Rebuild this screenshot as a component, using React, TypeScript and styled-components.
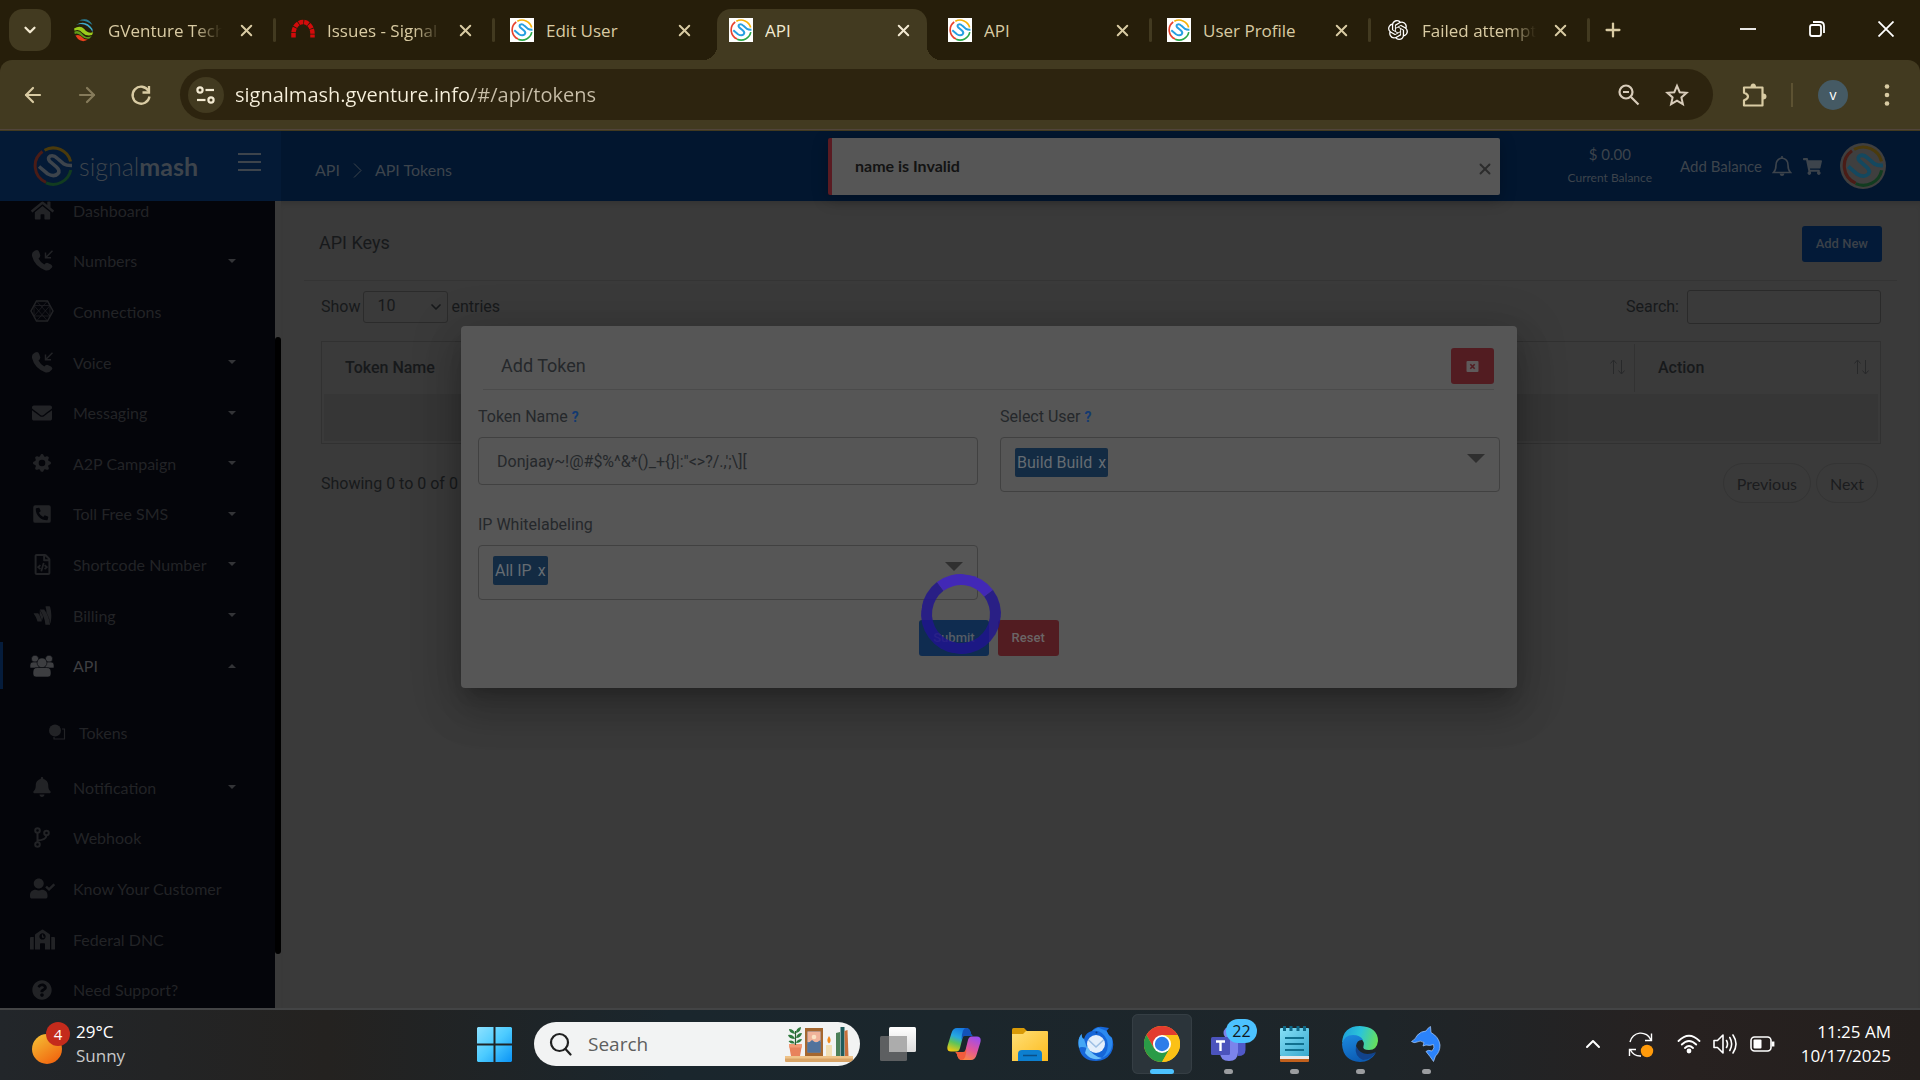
import React from 'react';
import styled, { createGlobalStyle, css } from 'styled-components';
import {
  FaHome, FaEnvelope, FaPhoneSquareAlt, FaRegFileCode, FaGoogleWallet, FaBell,
  FaUserCheck, FaSchool, FaQuestionCircle, FaShoppingCart,
} from 'react-icons/fa';
import { BsGearFill } from 'react-icons/bs';
import { SiOpenai } from 'react-icons/si';
import { ArrowLeft, ArrowRight, ChevronDown, ChevronUp, Plus, X } from 'lucide-react';

const ui = `"Open Sans", "Noto Sans", "Liberation Sans", sans-serif`;
const lato = `Lato, "Liberation Sans", sans-serif`;
const roboto = `Roboto, "Liberation Sans", sans-serif`;

const GlobalStyle = createGlobalStyle`
  *, *::before, *::after { box-sizing: border-box; }
  body { margin: 0; background: #3a3a3a; font-family: ${ui}; }
  button, input, select { font: inherit; color: inherit; margin: 0; }
  button { border: 0; padding: 0; background: none; cursor: pointer; }
  a { color: inherit; text-decoration: none; }
  svg { display: block; flex: none; }
`;

/* ---------- browser frame ---------- */

const Screen = styled.div`
  display: grid;
  grid-template-rows: auto auto minmax(0, 1fr) auto;
  height: 100vh;
  overflow: hidden;
`;

const TabStrip = styled.header`
  display: flex;
  align-items: flex-end;
  height: 60px;
  padding-left: 9px;
  background: #261e0a;
  color: #d9cba3;
`;

const TabSearch = styled.button`
  display: grid;
  place-items: center;
  width: 42px;
  height: 42px;
  margin: 0 9px 9px 0;
  border-radius: 14px;
  background: #423a20;
  color: #f3ead2;
`;

const Tab = styled.div<{ $active?: boolean; $divided?: boolean }>`
  position: relative;
  display: flex;
  align-items: center;
  flex: 0 1 210px;
  min-width: 0;
  height: 51px;
  padding: 0 14px 9px 12px;
  margin-right: 9px;
  ${p => p.$active && css`
    background: #423a20;
    color: #f3ead2;
    border-radius: 14px 14px 0 0;
    &::before, &::after {
      content: '';
      position: absolute;
      bottom: 0;
      width: 14px;
      height: 14px;
    }
    &::before { left: -14px; background: radial-gradient(circle at 0 0, transparent 14px, #423a20 14px); }
    &::after { right: -14px; background: radial-gradient(circle at 100% 0, transparent 14px, #423a20 14px); }
  `}
  ${p => p.$divided && css`
    &::after {
      content: '';
      position: absolute;
      right: -6px;
      top: 9px;
      width: 3px;
      height: 24px;
      border-radius: 2px;
      background: #423a20;
    }
  `}
`;

const TabTitle = styled.button<{ $fade?: boolean }>`
  flex: 1;
  min-width: 0;
  margin: 0 14px 0 12px;
  overflow: hidden;
  white-space: nowrap;
  text-align: left;
  font-size: 17px;
  line-height: 26px;
  padding-top: 1px;
  ${p => p.$fade && css`mask-image: linear-gradient(90deg, #000 76%, transparent);`}
`;

const IconButton = styled.button<{ $w?: number; $h?: number }>`
  display: grid;
  place-items: center;
  flex: none;
  width: ${p => p.$w ?? 20}px;
  height: ${p => p.$h ?? 24}px;
`;

const WindowControls = styled.div`
  display: flex;
  align-self: flex-start;
  margin-left: auto;
  color: #fff;
`;

const ToolbarBack = styled.div`
  background: #261e0a;
`;

const Toolbar = styled.nav`
  display: flex;
  align-items: center;
  height: 71px;
  padding: 0 9px 2px 6px;
  border-radius: 12px 12px 0 0;
  background: #423a20;
  box-shadow: inset 0 -1px #423a20, inset 0 -2px #51443a;
  color: #d9cba3;
`;

const Omnibox = styled.div`
  display: flex;
  align-items: center;
  flex: 1;
  height: 51px;
  margin: 0 13px 0 12px;
  padding: 0 12px 0 8px;
  border-radius: 26px;
  background: #2d240f;
  color: #d8ccba;
`;

const SiteInfo = styled.button`
  display: grid;
  place-items: center;
  width: 36px;
  height: 36px;
  border-radius: 50%;
  background: #423a20;
  color: #f3ead2;
`;

const Url = styled.input`
  flex: 1;
  min-width: 0;
  margin-left: 11px;
  padding: 0;
  border: 0;
  outline: 0;
  font-size: 20px;
  line-height: 30px;
  color: transparent;
  background: linear-gradient(90deg, #f7f0dc 237px, #c9bfa9 237px);
  background-clip: text;
  -webkit-background-clip: text;
`;

const ToolbarRule = styled.span`
  width: 2px;
  height: 24px;
  margin: 0 10px;
  background: #5d5232;
`;

const Profile = styled.button`
  display: grid;
  place-items: center;
  width: 30px;
  height: 30px;
  margin: 0 15px;
  border-radius: 50%;
  background: #455a64;
  color: #fff;
  font-size: 14px;
`;

/* ---------- web page ---------- */

const Page = styled.div`
  position: relative;
  display: grid;
  grid-template-columns: 281px minmax(0, 1fr);
  grid-template-rows: 70px minmax(0, 1fr);
  overflow: hidden;
  background: #3a3a3a;
  font-family: ${roboto};
  font-size: 16px;
  color: #17191b;
`;

const Brand = styled.div`
  display: flex;
  align-items: center;
  padding: 0 20px 1px 33px;
  background: #041a36;
  color: #3d444c;
`;

const BrandName = styled.a`
  margin: 0 auto 0 6px;
  font: 300 25px/32px ${lato};
  b { font-weight: 700; }
`;

const MenuToggle = styled(IconButton)`
  align-self: flex-start;
  margin-top: 19px;
`;

const Topbar = styled.div`
  display: flex;
  align-items: center;
  padding: 0 34px;
  background: #02162f;
  color: #3d444c;
  font-family: ${lato};
`;

const Crumbs = styled.nav`
  display: flex;
  align-items: center;
  gap: 13px;
  padding-top: 8px;
  margin-right: auto;
  line-height: 24px;
`;

const Balance = styled.div`
  display: flex;
  flex-direction: column;
  align-items: center;
  margin-right: 28px;
  font-size: 15px;
  line-height: 23px;
  small { font-size: 12px; }
`;

const TopLinks = styled.div`
  display: flex;
  align-items: center;
  gap: 10px;
  font-size: 15px;
`;

const Account = styled.button`
  display: grid;
  place-items: center;
  width: 46px;
  height: 46px;
  margin-left: 8px;
  border-radius: 50%;
  background: #3f3f3f;
`;

const Toast = styled.div`
  position: absolute;
  top: 7px;
  left: 828px;
  display: flex;
  align-items: center;
  justify-content: space-between;
  width: 35vw;
  height: 57px;
  padding: 0 5px 2px 23px;
  border-left: 4px solid #5a1b22;
  border-radius: 2px;
  background: #565656;
  box-shadow: 0 4px 16px rgba(0, 0, 0, 0.25);
  color: #131313;
  font: 700 16px/24px ${lato};
`;

const Dismiss = styled(IconButton)`
  align-self: flex-end;
  margin-bottom: 12px;
  color: #2c2c2c;
`;

const Sidebar = styled.aside`
  display: flex;
  overflow: hidden;
  font-family: ${lato};
`;

const Menu = styled.nav`
  flex: 1;
  min-width: 0;
  overflow: hidden;
  background: #04050a;
  color: #222326;
`;

const MenuGroup = styled.ul<{ $height: number; $scrolled?: boolean }>`
  display: grid;
  grid-template-columns: minmax(0, 1fr);
  grid-auto-rows: 1fr;
  align-items: center;
  height: ${p => p.$height}px;
  margin: ${p => (p.$scrolled ? '-16px' : '0')} 0 0;
  padding: 0;
  list-style: none;
`;

const MenuLink = styled.a<{ $active?: boolean }>`
  display: grid;
  grid-template-columns: 26px minmax(0, 1fr) 10px;
  align-items: center;
  column-gap: 18px;
  height: 47px;
  padding: 0 38px 0 26px;
  border-left: 3px solid ${p => (p.$active ? '#051c3b' : 'transparent')};
  color: ${p => (p.$active ? '#3d3e41' : 'inherit')};
  white-space: nowrap;
  > svg { justify-self: center; }
  > svg:last-child { color: #333437; }
`;

const SubLink = styled.a`
  display: flex;
  align-items: center;
  gap: 13px;
  height: 71px;
  padding: 11px 0 0 49px;
`;

const ScrollTrack = styled.div`
  width: 6px;
  padding-top: 136px;
  &::before {
    content: '';
    display: block;
    height: 617px;
    border-radius: 3px;
    background: #000;
  }
`;

const Content = styled.main`
  padding: 0 23px;
  box-shadow: inset 0 5px 6px -4px rgba(0, 0, 0, 0.18);
`;

const TitleRow = styled.div`
  display: flex;
  align-items: center;
  justify-content: space-between;
  height: 80px;
  padding: 7px 15px 0 15px;
  border-bottom: 1px solid #343434;
`;

const Heading = styled.h1`
  margin: 0;
  padding-bottom: 2px;
  font-size: 18px;
  font-weight: 400;
  line-height: 24px;
`;

const Button = styled.button<{ $tone: 'navy' | 'blue' | 'red' }>`
  display: grid;
  place-items: center;
  height: 36px;
  padding: 0 14px;
  border-radius: 3px;
  font: 500 13px/20px ${roboto};
  ${p => p.$tone === 'navy' && css`background: #031a38; color: #3b4149;`}
  ${p => p.$tone === 'blue' && css`background: #0f2c50; color: #565d66;`}
  ${p => p.$tone === 'red' && css`background: #521c21; color: #6b6566;`}
`;

const Controls = styled.div`
  display: flex;
  align-items: center;
  justify-content: space-between;
  padding: 9px 16px 17px 17px;
  line-height: 24px;
`;

const ControlLabel = styled.label`
  display: flex;
  align-items: center;
  gap: 3px;
`;

const SelectWrap = styled.span`
  display: grid;
  align-items: center;
  > * { grid-area: 1 / 1; }
  svg { justify-self: end; margin-right: 4px; pointer-events: none; }
`;

const EntriesSelect = styled.select`
  width: 85px;
  height: 32px;
  padding: 0 13px 2px;
  appearance: none;
  border: 1px solid #2b2b2b;
  border-radius: 3px;
  background: none;
`;

const SearchField = styled.input`
  width: 194px;
  height: 34px;
  margin-left: 5px;
  padding: 0 8px;
  border: 1px solid #2a2a2a;
  border-radius: 3px;
  background: none;
`;

const TableWrap = styled.div`
  padding: 0 16px 0 17px;
`;

const DataTable = styled.table`
  width: 100%;
  border: 1px solid #313131;
  border-collapse: separate;
  border-spacing: 2px;
  table-layout: fixed;
`;

const Th = styled.th<{ $w?: string; $divided?: boolean }>`
  width: ${p => p.$w ?? 'auto'};
  height: 48px;
  padding: 0 9px 2px 21px;
  border-right: ${p => (p.$divided ? '1px solid #323232' : '0')};
  font-weight: 500;
  text-align: left;
  > span { display: flex; align-items: center; justify-content: space-between; }
  svg { margin-left: auto; }
`;

const EmptyCell = styled.td`
  height: 47px;
  background: #363636;
`;

const TableFoot = styled.div`
  display: flex;
  align-items: center;
  justify-content: space-between;
  padding: 19px 19px 0 17px;
`;

const Pager = styled.div`
  display: flex;
  gap: 5px;
`;

const PageButton = styled.button`
  height: 40px;
  padding: 0 13px;
  border: 1px solid #343434;
  border-radius: 20px;
  font-family: ${lato};
  color: #1b1c1e;
`;

/* ---------- dialog ---------- */

const Overlay = styled.div`
  position: absolute;
  inset: 0;
  display: flex;
  align-items: flex-start;
  justify-content: center;
  padding: 195px 0 0 58px;
`;

const Dialog = styled.section`
  width: 55vw;
  padding: 22px 17px 32px;
  border-radius: 4px;
  background: #565656;
  box-shadow: 0 11px 15px -7px rgba(0, 0, 0, 0.2), 0 24px 38px 3px rgba(0, 0, 0, 0.14),
    0 9px 46px 8px rgba(0, 0, 0, 0.16);
  color: #25282b;
`;

const DialogHead = styled.div`
  display: flex;
  align-items: flex-start;
  justify-content: space-between;
  height: 42px;
  margin: 0 6px 14px 5px;
  padding-left: 18px;
  border-bottom: 1px solid #4b4b4b;
  ${Heading} { padding-top: 6px; }
`;

const Fields = styled.div`
  display: grid;
  grid-template-columns: 1fr 1fr;
  gap: 20px 22px;
  align-items: start;
`;

const Field = styled.div`
  display: grid;
  gap: 7px;
  > label, > span { line-height: 26px; }
`;

const Hint = styled.abbr`
  margin-left: 4px;
  color: #133a70;
  font-size: 14px;
  font-weight: 700;
  text-decoration: none;
`;

const TextInput = styled.input`
  width: 100%;
  height: 48px;
  padding: 0 18px;
  border: 1px solid #414141;
  border-radius: 4px;
  outline: 0;
  background: none;
`;

const MultiSelect = styled.div`
  display: flex;
  align-items: flex-start;
  justify-content: space-between;
  height: 55px;
  padding: 10px 14px 0;
  border: 1px solid #414141;
  border-radius: 4px;
`;

const Chip = styled.span`
  display: flex;
  align-items: center;
  gap: 6px;
  height: 29px;
  padding: 0 2px;
  border-radius: 2px;
  background: #132b43;
  color: #656c72;
`;

const Caret = styled.button`
  margin-top: 6px;
  border: 9px solid transparent;
  border-top-color: #2f2f2f;
  border-bottom-width: 0;
`;

const Actions = styled.div`
  display: flex;
  justify-content: center;
  gap: 9px;
  margin-top: 20px;
`;

const Spinner = styled.div`
  position: absolute;
  top: 443px;
  left: calc(50% - 39px);
  width: 80px;
  height: 80px;
  border: 11px solid rgba(32, 20, 144, 0.82);
  border-top-color: #4228b6;
  border-radius: 50%;
  transform: rotate(8deg);
`;

/* ---------- taskbar ---------- */

const Taskbar = styled.footer`
  display: grid;
  grid-template-columns: 1fr auto 1fr;
  align-items: center;
  height: 72px;
  padding-bottom: 2px;
  border-top: 2px solid #434445;
  background: linear-gradient(90deg, #22262a, #242220 17%, #1a262d 35%, #1b262c 50%, #1e2529 72%, #272120 88%, #241f1d);
  color: #fff;
  font-size: 17px;
  line-height: 24px;
`;

const Weather = styled.button`
  display: flex;
  align-items: center;
  gap: 4px;
  justify-self: start;
  margin-left: 31px;
  text-align: left;
  small { display: block; font-size: 17px; color: #c9c9c9; }
`;

const TaskItems = styled.div`
  display: flex;
  align-items: center;
  gap: 6px;
`;

const Tile = styled.button<{ $active?: boolean; $dot?: boolean }>`
  position: relative;
  display: grid;
  place-items: center;
  width: 60px;
  height: 60px;
  border-radius: 6px;
  ${p => p.$active && css`background: #2b343a; box-shadow: inset 0 0 0 1px #353e44;`}
  ${p => (p.$active || p.$dot) && css`
    &::after {
      content: '';
      position: absolute;
      bottom: 0;
      width: ${p.$active ? 24 : 9}px;
      height: 5px;
      border-radius: 3px;
      background: ${p.$active ? '#4cc2ff' : '#9b9da0'};
    }
  `}
`;

const Badge = styled.span`
  position: absolute;
  top: 5px;
  right: 1px;
  width: 31px;
  height: 24px;
  border-radius: 12px;
  background: #4cc2ff;
  color: #101820;
  font-size: 16px;
  line-height: 24px;
`;

const SearchBox = styled.label`
  display: flex;
  align-items: center;
  width: 326px;
  height: 44px;
  margin: 0 2px 0 4px;
  padding: 0 7px 0 14px;
  border-radius: 22px;
  background: #f2f3f3;
  overflow: hidden;
  input {
    flex: 1;
    min-width: 0;
    margin-left: 16px;
    padding: 0;
    border: 0;
    background: none;
    font-size: 19px;
    line-height: 30px;
  }
  input::placeholder { color: #5e5e5e; opacity: 1; }
`;

const Tray = styled.div`
  display: flex;
  align-items: center;
  justify-self: end;
  margin-right: 29px;
`;

const Clock = styled.time`
  margin-left: 14px;
  text-align: right;
  white-space: pre-line;
`;

/* ---------- drawings ---------- */

const Mark = ({ size, dim, mono }: { size: number; dim?: boolean; mono?: boolean }) => {
  const c = dim ? ['#4a1c16', '#4a3a0c', '#123c20'] : ['#e8432e', '#f5b20a', '#2aa84a'];
  return (
    <svg width={size} height={size} viewBox="0 0 40 40" fill="none" strokeWidth="3" aria-hidden>
      <path d="M13 36.3A17.8 17.8 0 0 1 9.5 5.5" stroke={c[0]} />
      <path d="M11.5 4.2A18 18 0 0 1 37.6 15.5" stroke={c[1]} />
      <path d="M37.8 24A18 18 0 0 1 13 36.8" stroke={c[2]} />
      <path
        d="M6 20.5L14.5 27.7Q21 31.5 25 27.6Q27.5 24.6 23.5 21L16.5 15Q14.3 12 17 10.2Q20.5 8.6 24.5 12.5L31 18Q33.5 19.7 39 19.5"
        stroke={mono ? '#3d444c' : dim ? '#14485f' : '#27a0e0'}
        strokeWidth="3.6"
      />
    </svg>
  );
};

const Favicon = styled.span`
  display: grid;
  place-items: center;
  width: 24px;
  height: 24px;
  background: #fff;
`;

const MashIcon = () => <Favicon><Mark size={22} /></Favicon>;

const GVentureIcon = () => (
  <svg width="24" height="24" viewBox="0 0 24 24" aria-hidden>
    <g transform="rotate(14 12 12)">
      <path d="M5 4Q13-2 19 5Q11 2 5 4Z" fill="#2b7f98" />
      <path d="M3 9Q11 1 20 9L21 12Q12 3 3 9Z" fill="#3fa9c9" />
      <path d="M2 13Q7 8 12 11Q17 15 21.500 12L21 15Q16 18 11 15Q7 12 3 15Z" fill="#9ccb1c" />
      <path d="M3 16Q7 13 11 16Q16 20 21 16L19.500 19Q15 21 11 18.500Q7 16 4 18Z" fill="#5f9c18" />
      <path d="M5 19.500Q8 17 11 19Q15 22 18.500 20Q15 24 10.500 23Q8 22.500 5 19.500Z" fill="#e8401c" />
    </g>
  </svg>
);

const RedmineIcon = () => (
  <svg width="24" height="24" viewBox="0 0 24 24" fill="none" aria-hidden>
    <path d="M2.500 19.500V15.500A9.500 11.500 0 0 1 21.500 15.500V19.500" stroke="#d30b0b" strokeWidth="4.500" strokeDasharray="4.600 .8" />
  </svg>
);

const ReloadIcon = () => (
  <svg width="22" height="22" viewBox="0 0 22 22" fill="none" stroke="currentColor" strokeWidth="2.300" aria-hidden>
    <path d="M18.500 7A8.500 8.500 0 1 0 19.500 12.500" />
    <path d="M19 2V8.500H12.500" />
  </svg>
);

const TuneIcon = () => (
  <svg width="20" height="20" viewBox="0 0 20 20" fill="none" stroke="currentColor" strokeWidth="2.200" aria-hidden>
    <circle cx="4" cy="5" r="2.600" /><path d="M9.500 5H18" />
    <circle cx="15" cy="15" r="2.600" /><path d="M1 15H9.500" />
  </svg>
);

const ZoomOutIcon = () => (
  <svg width="24" height="24" viewBox="0 0 24 24" fill="none" stroke="currentColor" strokeWidth="2.200" aria-hidden>
    <circle cx="9" cy="9" r="6.500" /><path d="M14 14L21.500 21.500M6 9H12" />
  </svg>
);

const StarIcon = () => (
  <svg width="24" height="24" viewBox="0 0 24 24" fill="none" stroke="currentColor" strokeWidth="2" aria-hidden>
    <path d="M12 2.800L14.700 9.200L21.600 9.800L16.400 14.400L17.900 21.200L12 17.600L6.100 21.200L7.600 14.400L2.400 9.800L9.300 9.200Z" />
  </svg>
);

const PuzzleIcon = () => (
  <svg width="28" height="28" viewBox="0 0 28 28" fill="none" stroke="currentColor" strokeWidth="2.200" strokeLinejoin="round" aria-hidden>
    <path d="M4 6.500H22.500V24.500H4V19.200Q8 18 8 15.500Q8 13 4 11.800Z" />
    <path d="M10.500 6Q10.500 2.500 13.300 2.500Q16 2.500 16 6ZM23 12.500Q26.500 12.500 26.500 15.500Q26.500 18.500 23 18.500Z" fill="currentColor" stroke="none" />
  </svg>
);

const DotsIcon = () => (
  <svg width="6" height="24" viewBox="0 0 6 24" fill="currentColor" aria-hidden>
    <circle cx="3" cy="3.500" r="2.300" /><circle cx="3" cy="12" r="2.300" /><circle cx="3" cy="20.500" r="2.300" />
  </svg>
);

const WindowGlyph = ({ d }: { d: string }) => (
  <svg width="16" height="16" viewBox="0 0 16 16" fill="none" stroke="currentColor" strokeWidth="1.800" aria-hidden><path d={d} /></svg>
);

const BarsIcon = () => (
  <svg width="23" height="20" viewBox="0 0 23 20" stroke="currentColor" strokeWidth="2" aria-hidden>
    <path d="M0 2H23M0 10H23M0 18H23" />
  </svg>
);

const CrumbIcon = () => (
  <svg width="9" height="15" viewBox="0 0 9 15" fill="none" stroke="currentColor" aria-hidden><path d="M1 .5L8 7.500L1 14.500" /></svg>
);

const BellOutline = () => (
  <svg width="20" height="22" viewBox="0 0 20 22" fill="none" stroke="currentColor" strokeWidth="1.600" aria-hidden>
    <path d="M1.500 17.500Q4 15 4 10Q4 4 10 3Q16 4 16 10Q16 15 18.500 17.500ZM10 3V1" />
    <path d="M7.500 18.500H12.500Q12 21 10 21Q8 21 7.500 18.500Z" fill="currentColor" stroke="none" />
  </svg>
);

const SortIcon = () => (
  <svg width="15" height="16" viewBox="0 0 15 16" fill="none" stroke="#28292a" aria-hidden>
    <path d="M3.500 15V1.500M.5 4.500L3.500 1L6.500 4.500M11.500 1V14.500M8.500 11.500L11.500 15L14.500 11.500" />
  </svg>
);

const CaretGlyph = ({ up }: { up?: boolean }) => (
  <svg width="8" height="4" viewBox="0 0 8 4" fill="currentColor" aria-hidden><path d={up ? 'M0 4L4 0L8 4Z' : 'M0 0H8L4 4Z'} /></svg>
);

const PhoneInIcon = () => (
  <svg width="21" height="21" viewBox="0 0 21 21" aria-hidden>
    <path d="M1 2Q3 0 5 0Q6.500 0 7.200 2L8.200 5Q8.700 7 6.500 8.600Q8.500 12.600 12.300 14.400Q14 12.400 15.800 13L19 14.500Q21 15.800 20 17.500Q17.500 21.200 13 20.200Q2.500 16 0 6Q-.2 3.300 1 2Z" fill="currentColor" />
    <path d="M20.500 .8L14 7.300M13.500 2.500V7.700H19" fill="none" stroke="currentColor" strokeWidth="1.500" />
  </svg>
);

const HexIcon = () => (
  <svg width="24" height="22" viewBox="0 0 24 22" fill="none" stroke="currentColor" aria-hidden>
    <path d="M6.500 1H17.500L23 11L17.500 21H6.500L1 11Z" strokeWidth="1.500" />
    <path d="M6.500 1L20 16H4L17.500 1L20 5.500L6.500 21M4 5.500L17.500 21M4 5.500V16M20 5.500V16M4 5.500H20" strokeWidth=".7" />
  </svg>
);

const GroupIcon = () => (
  <svg width="24" height="22" viewBox="0 0 24 22" fill="currentColor" stroke="#04050a" strokeWidth=".6" aria-hidden>
    <circle cx="5" cy="3.800" r="3.600" /><circle cx="19" cy="3.800" r="3.600" />
    <path d="M0 13V10Q0 7 3 7H9V13ZM24 13V10Q24 7 21 7H15V13Z" />
    <circle cx="12" cy="7.800" r="4.900" />
    <path d="M3 19V17Q3 12.500 7.500 12.500H16.500Q21 12.500 21 17V19Q21 22 18 22H6Q3 22 3 19Z" />
  </svg>
);

const BranchIcon = () => (
  <svg width="18" height="21" viewBox="0 0 18 21" fill="none" stroke="currentColor" strokeWidth="2" aria-hidden>
    <circle cx="4.500" cy="3.500" r="2.300" /><circle cx="4.500" cy="17.500" r="2.300" /><circle cx="13.500" cy="6" r="2.300" />
    <path d="M4.500 6V15M4.500 13.500Q13 13 13.500 8.500" />
  </svg>
);

const TokensIcon = () => (
  <svg width="17" height="17" viewBox="0 0 17 17" aria-hidden>
    <path d="M13 5H15.500V15H5V13" fill="none" stroke="currentColor" strokeWidth="1.200" />
    <circle cx="6" cy="6.500" r="6" fill="currentColor" />
  </svg>
);

const CloseBox = () => (
  <svg width="15" height="11" viewBox="0 0 15 11" aria-hidden>
    <rect x="1.500" width="12" height="11" rx="1" fill="#5f5a5b" />
    <path d="M5.300 3.300L9.700 7.700M9.700 3.300L5.300 7.700" stroke="#521c21" strokeWidth="1.600" />
  </svg>
);

const SunIcon = () => (
  <svg width="41" height="44" viewBox="0 0 41 44" aria-hidden>
    <defs><linearGradient id="sun" x1="0" y1="0" x2=".7" y2="1"><stop stopColor="#f4c437" /><stop offset="1" stopColor="#f2660f" /></linearGradient></defs>
    <circle cx="16" cy="27" r="15" fill="url(#sun)" />
    <circle cx="27" cy="12" r="12" fill="#c42b1c" />
    <text x="27" y="17.500" textAnchor="middle" fill="#fff" fontSize="15">4</text>
  </svg>
);

const StartIcon = () => (
  <svg width="35" height="35" viewBox="0 0 35 35" aria-hidden>
    <defs><linearGradient id="win" x1="0" y1="0" x2="1" y2="1"><stop stopColor="#8ee2ff" /><stop offset=".5" stopColor="#4ccbff" /><stop offset="1" stopColor="#0a93f5" /></linearGradient></defs>
    <path d="M1 0H16.500V16.500H0V1ZM18.500 0H34L35 1V16.500H18.500ZM0 18.500H16.500V35H1L0 34ZM18.500 18.500H35V34L34 35H18.500Z" fill="url(#win)" />
  </svg>
);

const ShelfIcon = () => (
  <svg width="68" height="38" viewBox="0 0 68 38" aria-hidden>
    <rect y="31" width="68" height="6" rx="1" fill="#d9a466" /><rect y="31" width="68" height="2.500" fill="#efc389" />
    <path d="M4 20H17L15 31H6Z" fill="#e8825c" /><rect x="4" y="19" width="13" height="3.500" fill="#f29a74" />
    <path d="M10.500 20V6" stroke="#2d5b33" strokeWidth="1.200" />
    <path d="M10 9Q4 8 4 4Q9 4 10 9ZM11 8Q11 3 16 2Q16 7 11 8ZM10 14Q4 14 3 10Q8 9 10 14ZM11 13Q12 8 17 8Q16 13 11 13ZM10 18.500Q5 19 3.500 16Q8 14 10 18.500ZM11 18Q12 14 17 14Q16 18 11 18Z" fill="#2f7a3f" />
    <rect x="20" y="3" width="18" height="28" fill="#a5672f" /><rect x="22.500" y="6.500" width="13" height="21" fill="#5b8cc0" />
    <path d="M22.500 6.500H35.500V17H22.500Z" fill="#f0b39a" /><circle cx="29" cy="12" r="2.300" fill="#fbe3c4" /><path d="M22.500 19L27 15L31 18L35.500 15V27.500H22.500Z" fill="#52739c" />
    <rect x="41" y="20" width="6" height="11" fill="#f2dfb4" /><path d="M44 11Q47.500 16 44 18.500Q40.500 16 44 11Z" fill="#f28a1c" />
    <path d="M51 8L55 7V31H51Z" fill="#4c7f58" /><rect x="55.500" y="2" width="4" height="29" fill="#1f5b5b" />
    <path d="M59.500 6L62.500 5L63.500 31H60Z" fill="#c8703c" />
  </svg>
);

const TaskViewIcon = () => (
  <svg width="36" height="34" viewBox="0 0 36 34" aria-hidden>
    <defs>
      <linearGradient id="tv" x1="0" y1="0" x2="0" y2="1"><stop stopColor="#fff" /><stop offset="1" stopColor="#dcdcdc" /></linearGradient>
    </defs>
    <rect x="9" y="0" width="27" height="25" rx="1.500" fill="url(#tv)" />
    <rect x="0" y="9" width="27" height="25" rx="1.500" fill="#5d5f61" />
    <rect x="9" y="9" width="18" height="16" fill="#acacac" />
  </svg>
);

const CopilotIcon = () => (
  <svg width="34" height="32" viewBox="0 0 34 32" aria-hidden>
    <defs>
      <linearGradient id="cpa" x1=".6" y1="0" x2=".2" y2="1"><stop stopColor="#1476e0" /><stop offset=".4" stopColor="#27a9e0" /><stop offset=".65" stopColor="#5cc45a" /><stop offset="1" stopColor="#f2c80f" /></linearGradient>
      <linearGradient id="cpb" x1=".8" y1="0" x2=".3" y2="1"><stop stopColor="#9a4df0" /><stop offset=".5" stopColor="#e0559c" /><stop offset="1" stopColor="#ff8a3c" /></linearGradient>
    </defs>
    <path d="M16 8H26Q24.500 8 23.500 4Q22.500 0 19 0H10Q6 0 4.500 5L.8 17Q-1 23.500 4 23.500H9.500Q12 23.500 13 20Z" fill="url(#cpa)" />
    <path d="M18 24H8Q9.500 24 10.500 28Q11.500 32 15 32H24Q28 32 29.500 27L33.200 15Q35 8.500 30 8.500H24.500Q22 8.500 21 12Z" fill="url(#cpb)" />
    <path d="M19 0Q22.500 0 23.500 4Q24.500 8 26 8H18Q15.500 8 14.500 12Q15 0 19 0Z" fill="#1352b8" />
    <path d="M15 32Q11.500 32 10.500 28Q9.500 24 8 24H16Q18.500 24 19.500 20Q19 32 15 32Z" fill="#f25c3c" />
  </svg>
);

const FolderIcon = () => (
  <svg width="36" height="33" viewBox="0 0 36 33" aria-hidden>
    <defs><linearGradient id="fd" x1="0" y1="0" x2="1" y2="1"><stop stopColor="#ffdf76" /><stop offset="1" stopColor="#fdbb1e" /></linearGradient></defs>
    <path d="M0 1.500Q0 0 1.500 0H12L16 4L12 8H0Z" fill="#d99a07" />
    <path d="M0 6H11L14 3H35Q36 3 36 4V33H0Z" fill="url(#fd)" />
    <path d="M6 33V26Q6 22 10 22H26Q30 22 30 26V33Z" fill="#0d7fcf" /><path d="M11 27.500H25" stroke="#0b4f86" strokeWidth="1.500" />
  </svg>
);

const ThunderbirdIcon = () => (
  <svg width="36" height="36" viewBox="0 0 36 36" aria-hidden>
    <path d="M18 35Q4 35 1 22Q-1 12 4 8Q3 12 6 13Q8 6 14 5Q18 0 25 1L31 2L28.500 5Q30 9 34 12Q37 20 33 27Q28 35 18 35Z" fill="#1666d8" />
    <path d="M4 8Q3 12 6 13L9 22Q3 20 1 22Q-1 12 4 8Z" fill="#43a6f5" />
    <path d="M14 5Q24 3 29 14Q32 24 24 32Q36 27 34 12Q30 9 28.500 5L20 1.500Z" fill="#2b8af0" />
    <path d="M7 27Q14 36 24 32Q14 30 9 20Z" fill="#6cc0fa" />
    <circle cx="18" cy="18" r="9" fill="#e4effb" /><path d="M10.500 14L18 21L25.500 14" fill="none" stroke="#9dbfe4" strokeWidth="1.600" />
    <circle cx="18.500" cy="6.500" r="1" fill="#0b3c86" />
  </svg>
);

const ChromeIcon = () => (
  <svg width="36" height="36" viewBox="0 0 36 36" aria-hidden>
    <circle cx="18" cy="18" r="18" fill="#fbc116" />
    <path d="M2.410 9A18 18 0 0 1 33.590 9H18L10.200 22.500Z" fill="#e33b2e" />
    <path d="M2.410 9A18 18 0 0 0 18 36L25.800 22.500H10.200Z" fill="#2a9b47" />
    <path d="M18 9H33.590A18 18 0 0 1 18 36L25.800 22.500Z" fill="#fbc116" />
    <circle cx="18" cy="18" r="9" fill="#fff" /><circle cx="18" cy="18" r="7.200" fill="#2d7de9" />
  </svg>
);

const TeamsIcon = () => (
  <svg width="36" height="36" viewBox="0 0 36 36" aria-hidden>
    <circle cx="20" cy="7" r="6.500" fill="#7b83eb" />
    <path d="M24 13H35.500V24Q35.500 30 28 30Z" fill="#5059c9" />
    <path d="M10 12H28V26Q28 35 19 35Q10 35 10 26Z" fill="#7b83eb" />
    <rect x="1" y="11" width="19" height="18" rx="1.500" fill="#4b53bc" />
    <path d="M6 15.500H15M10.500 15.500V25" stroke="#fff" strokeWidth="2.400" />
  </svg>
);

const NotepadIcon = () => (
  <svg width="29" height="36" viewBox="0 0 29 36" aria-hidden>
    <defs><linearGradient id="np" x1="0" y1="0" x2="1" y2="1"><stop stopColor="#86e0f7" /><stop offset="1" stopColor="#38a9cf" /></linearGradient></defs>
    <rect y="2" width="29" height="28" rx="1" fill="url(#np)" />
    <path d="M4.500 0V5M11 0V5M18 0V5M24.500 0V5" stroke="#0f6785" strokeWidth="3" />
    <path d="M5 12H24M5 18H24M5 24H24" stroke="#10708f" strokeWidth="2" />
    <path d="M0 30H29V33H0Z" fill="#e9e9e9" /><path d="M0 33H29V35Q29 36 28 36H1Q0 36 0 35Z" fill="#c2601c" />
  </svg>
);

const EdgeIcon = () => (
  <svg width="36" height="36" viewBox="0 0 36 36" aria-hidden>
    <defs>
      <linearGradient id="ed1" x1="0" y1=".3" x2="1" y2=".5"><stop stopColor="#1e9fdc" /><stop offset=".5" stopColor="#2cc5d8" /><stop offset="1" stopColor="#66e05c" /></linearGradient>
      <linearGradient id="ed2" x1="0" y1="0" x2=".4" y2="1"><stop stopColor="#1c8ae0" /><stop offset="1" stopColor="#0c5cb4" /></linearGradient>
    </defs>
    <path d="M0 17Q1 0 18 0Q36 1 36 15Q35 24 27 24Q20 24 21.500 20Q23 16 19 13Q10 6 0 17Z" fill="url(#ed1)" />
    <path d="M0 18Q2 9 11 9Q18 9 21 14Q15 13 14 20Q14 28 22 31Q28 32 34 27Q28 36 18 36Q1 35 0 18Z" fill="url(#ed2)" />
    <path d="M14 20Q12 30 21 34Q30 33 34 26Q20 32 14 20Z" fill="#12438c" />
  </svg>
);

const DolphinIcon = () => (
  <svg width="30" height="36" viewBox="0 0 30 36" fill="#2b83fb" stroke="#a9cdfd" strokeWidth=".7" aria-hidden>
    <path d="M.5 15.500Q5 13 6 9.500Q10 5 15 5Q17 1.500 19.500 .5L20 6.500Q28 11 29 19Q29 26 24.500 30L22.500 35.500L19 30.500L15 25.500Q17 23.500 21 25Q24 22 22.500 18.500Q19 20 15 19L12 20L13 16.500Q9 14 6 16Q3 17.500 .5 15.500Z" />
  </svg>
);

const SyncIcon = () => (
  <svg width="26" height="26" viewBox="0 0 26 26" fill="none" stroke="#fff" strokeWidth="1.400" aria-hidden>
    <path d="M2 10A11 11 0 0 1 23 8M23.500 1.500V8.500H17M1.500 24V17.500H8M2.500 18A11 11 0 0 0 13 24" />
    <circle cx="19" cy="19" r="6.200" fill="#ff9a0a" stroke="none" />
  </svg>
);

const WifiIcon = () => (
  <svg width="24" height="20" viewBox="0 0 24 20" fill="none" stroke="#fff" strokeWidth="1.800" strokeLinecap="round" aria-hidden>
    <path d="M1.500 7Q12-3.500 22.500 7M4.800 10.500Q12 3.500 19.200 10.500M8 14Q12 10 16 14" /><circle cx="12" cy="17" r="1.500" fill="#fff" />
  </svg>
);

const VolumeIcon = () => (
  <svg width="25" height="22" viewBox="0 0 25 22" fill="none" stroke="#fff" strokeWidth="1.600" strokeLinejoin="round" strokeLinecap="round" aria-hidden>
    <path d="M1 7.500H4.500L10 2V20L4.500 14.500H1ZM13.500 7.500Q15.500 11 13.500 14.500M16.800 4.500Q20.500 11 16.800 17.500M20 2Q26 11 20 20" />
  </svg>
);

const BatteryIcon = () => (
  <svg width="25" height="16" viewBox="0 0 25 16" fill="none" stroke="#fff" strokeWidth="1.600" aria-hidden>
    <rect x="1" y="1" width="20" height="14" rx="3.500" /><rect x="3.500" y="3.500" width="8" height="9" rx="1" fill="#fff" stroke="none" /><path d="M23 5.500V10.500" strokeWidth="2.800" />
  </svg>
);

const LensIcon = () => (
  <svg width="24" height="24" viewBox="0 0 24 24" fill="none" stroke="#202020" strokeWidth="2.200" strokeLinecap="round" aria-hidden>
    <circle cx="11.500" cy="10.500" r="8.500" /><path d="M17.500 17L22.500 22.500" />
  </svg>
);

/* ---------- data ---------- */

const tabs = [
  { title: 'GVenture Tech', icon: <GVentureIcon />, divided: true, fade: true },
  { title: 'Issues - Signal', icon: <RedmineIcon />, divided: true, fade: true },
  { title: 'Edit User', icon: <MashIcon /> },
  { title: 'API', icon: <MashIcon />, active: true },
  { title: 'API', icon: <MashIcon />, divided: true },
  { title: 'User Profile', icon: <MashIcon />, divided: true },
  { title: 'Failed attempt', icon: <SiOpenai size={20} color="#fff" style={{ margin: '0 2px' }} />, divided: true, fade: true },
];

type Item = { name: string; icon: React.ReactNode; caret?: boolean; active?: boolean };

const mainItems: Item[] = [
  { name: 'Dashboard', icon: <FaHome size={23} /> },
  { name: 'Numbers', icon: <PhoneInIcon />, caret: true },
  { name: 'Connections', icon: <HexIcon /> },
  { name: 'Voice', icon: <PhoneInIcon />, caret: true },
  { name: 'Messaging', icon: <FaEnvelope size={20} />, caret: true },
  { name: 'A2P Campaign', icon: <BsGearFill size={18} />, caret: true },
  { name: 'Toll Free SMS', icon: <FaPhoneSquareAlt size={20} />, caret: true },
  { name: 'Shortcode Number', icon: <FaRegFileCode size={21} />, caret: true },
  { name: 'Billing', icon: <FaGoogleWallet size={21} />, caret: true },
  { name: 'API', icon: <GroupIcon />, caret: true, active: true },
];

const moreItems: Item[] = [
  { name: 'Notification', icon: <FaBell size={20} />, caret: true },
  { name: 'Webhook', icon: <BranchIcon /> },
  { name: 'Know Your Customer', icon: <FaUserCheck size={25} /> },
  { name: 'Federal DNC', icon: <FaSchool size={25} /> },
  { name: 'Need Support?', icon: <FaQuestionCircle size={20} /> },
];

const MenuItem = ({ name, icon, caret, active }: Item) => (
  <li>
    <MenuLink href="#" $active={active}>
      {icon}
      <span>{name}</span>
      {caret && <CaretGlyph up={active} />}
    </MenuLink>
  </li>
);

export default function App() {
  return (
    <Screen>
      <GlobalStyle />
      <TabStrip>
        <TabSearch aria-label="Search tabs"><ChevronDown size={18} strokeWidth={3} /></TabSearch>
        {tabs.map((t, i) => (
          <Tab key={i} $active={t.active} $divided={t.divided}>
            {t.icon}
            <TabTitle $fade={t.fade}>{t.title}</TabTitle>
            <IconButton aria-label="Close tab"><X size={19} strokeWidth={2.5} /></IconButton>
          </Tab>
        ))}
        <IconButton $w={40} $h={60} aria-label="New tab"><Plus size={22} strokeWidth={2.5} /></IconButton>
        <WindowControls>
          <IconButton $w={69} $h={58} aria-label="Minimize"><WindowGlyph d="M0 8H16" /></IconButton>
          <IconButton $w={69} $h={58} aria-label="Restore"><WindowGlyph d="M3 4H10Q12 4 12 6V13Q12 15 10 15H3Q1 15 1 13V6Q1 4 3 4ZM4 1H11Q15 1 15 5V12" /></IconButton>
          <IconButton $w={69} $h={58} aria-label="Close"><WindowGlyph d="M.5 .5L15.500 15.500M15.500 .5L.5 15.500" /></IconButton>
        </WindowControls>
      </TabStrip>

      <ToolbarBack>
        <Toolbar>
          <IconButton $w={54} $h={40} aria-label="Back"><ArrowLeft size={24} strokeWidth={2.2} /></IconButton>
          <IconButton $w={54} $h={40} aria-label="Forward" disabled style={{ opacity: 0.45 }}><ArrowRight size={24} strokeWidth={2.2} /></IconButton>
          <IconButton $w={54} $h={40} aria-label="Reload"><ReloadIcon /></IconButton>
          <Omnibox>
            <SiteInfo aria-label="Site information"><TuneIcon /></SiteInfo>
            <Url aria-label="Address" defaultValue="signalmash.gventure.info/#/api/tokens" />
            <IconButton $w={48} $h={40} aria-label="Zoom"><ZoomOutIcon /></IconButton>
            <IconButton $w={48} $h={40} aria-label="Bookmark"><StarIcon /></IconButton>
          </Omnibox>
          <IconButton $w={55} $h={40} aria-label="Extensions"><PuzzleIcon /></IconButton>
          <ToolbarRule />
          <Profile>v</Profile>
          <IconButton $w={48} $h={40} aria-label="Menu"><DotsIcon /></IconButton>
        </Toolbar>
      </ToolbarBack>

      <Page>
        <Brand>
          <Mark size={40} dim mono />
          <BrandName href="#">signal<b>mash</b></BrandName>
          <MenuToggle $w={23} aria-label="Toggle menu"><BarsIcon /></MenuToggle>
        </Brand>
        <Topbar>
          <Crumbs aria-label="Breadcrumb"><a href="#">API</a><CrumbIcon /><a href="#">API Tokens</a></Crumbs>
          <Balance><span>$ 0.00</span><small>Current Balance</small></Balance>
          <TopLinks>
            <a href="#">Add Balance</a>
            <IconButton aria-label="Notifications"><BellOutline /></IconButton>
            <IconButton aria-label="Cart"><FaShoppingCart size={19} /></IconButton>
            <Account aria-label="Account"><Mark size={42} dim /></Account>
          </TopLinks>
        </Topbar>

        <Sidebar>
          <Menu>
            <MenuGroup $height={506} $scrolled>{mainItems.map(m => <MenuItem key={m.name} {...m} />)}</MenuGroup>
            <SubLink href="#"><TokensIcon /><span>Tokens</span></SubLink>
            <MenuGroup $height={253}>{moreItems.map(m => <MenuItem key={m.name} {...m} />)}</MenuGroup>
          </Menu>
          <ScrollTrack />
        </Sidebar>

        <Content>
          <TitleRow>
            <Heading>API Keys</Heading>
            <Button $tone="navy">Add New</Button>
          </TitleRow>
          <Controls>
            <ControlLabel>
              Show
              <SelectWrap>
                <EntriesSelect defaultValue="10"><option>10</option></EntriesSelect>
                <ChevronDown size={16} strokeWidth={2.5} />
              </SelectWrap>
              entries
            </ControlLabel>
            <ControlLabel>Search:<SearchField type="search" /></ControlLabel>
          </Controls>
          <TableWrap>
            <DataTable>
              <thead>
                <tr>
                  <Th $w="300px"><span>Token Name</span></Th>
                  <Th $divided><span><SortIcon /></span></Th>
                  <Th $w="241px"><span>Action<SortIcon /></span></Th>
                </tr>
              </thead>
              <tbody><tr><EmptyCell colSpan={3} /></tr></tbody>
            </DataTable>
          </TableWrap>
          <TableFoot>
            <span>Showing 0 to 0 of 0 entries</span>
            <Pager><PageButton>Previous</PageButton><PageButton>Next</PageButton></Pager>
          </TableFoot>
        </Content>

        <Overlay>
          <Dialog role="dialog" aria-label="Add Token">
            <DialogHead>
              <Heading as="h2">Add Token</Heading>
              <Button $tone="red" aria-label="Close"><CloseBox /></Button>
            </DialogHead>
            <Fields>
              <Field>
                <label htmlFor="token-name">Token Name<Hint>?</Hint></label>
                <TextInput id="token-name" defaultValue={`Donjaay~!@#$%^&*()_+{}|:"<>?/.,';\\][`} />
              </Field>
              <Field>
                <span id="user-label">Select User<Hint>?</Hint></span>
                <MultiSelect role="group" aria-labelledby="user-label">
                  <Chip>Build Build<button aria-label="Remove Build Build">x</button></Chip>
                  <Caret aria-label="Open users" />
                </MultiSelect>
              </Field>
              <Field>
                <span id="ip-label">IP Whitelabeling</span>
                <MultiSelect role="group" aria-labelledby="ip-label">
                  <Chip>All IP<button aria-label="Remove All IP">x</button></Chip>
                  <Caret aria-label="Open addresses" />
                </MultiSelect>
              </Field>
            </Fields>
            <Actions>
              <Button $tone="blue">Submit</Button>
              <Button $tone="red">Reset</Button>
            </Actions>
          </Dialog>
        </Overlay>

        <Toast role="alert">
          name is Invalid
          <Dismiss aria-label="Dismiss"><X size={18} strokeWidth={2.5} /></Dismiss>
        </Toast>
        <Spinner role="status" aria-label="Loading" />
      </Page>

      <Taskbar>
        <Weather><SunIcon /><span>29°C<small>Sunny</small></span></Weather>
        <TaskItems>
          <Tile aria-label="Start"><StartIcon /></Tile>
          <SearchBox><LensIcon /><input placeholder="Search" aria-label="Search" /><ShelfIcon /></SearchBox>
          <Tile aria-label="Task view"><TaskViewIcon /></Tile>
          <Tile aria-label="Copilot"><CopilotIcon /></Tile>
          <Tile aria-label="File Explorer"><FolderIcon /></Tile>
          <Tile aria-label="Thunderbird"><ThunderbirdIcon /></Tile>
          <Tile aria-label="Chrome" $active><ChromeIcon /></Tile>
          <Tile aria-label="Teams" $dot><TeamsIcon /><Badge>22</Badge></Tile>
          <Tile aria-label="Notepad" $dot><NotepadIcon /></Tile>
          <Tile aria-label="Edge" $dot><EdgeIcon /></Tile>
          <Tile aria-label="Dolphin" $dot><DolphinIcon /></Tile>
        </TaskItems>
        <Tray>
          <IconButton $w={48} aria-label="Hidden icons"><ChevronUp size={24} /></IconButton>
          <IconButton $w={48} aria-label="Updates"><SyncIcon /></IconButton>
          <IconButton $w={48} aria-label="Network"><WifiIcon /></IconButton>
          <IconButton $w={26} aria-label="Volume"><VolumeIcon /></IconButton>
          <IconButton $w={48} aria-label="Battery"><BatteryIcon /></IconButton>
          <Clock>{'11:25 AM\n10/17/2025'}</Clock>
        </Tray>
      </Taskbar>
    </Screen>
  );
}
